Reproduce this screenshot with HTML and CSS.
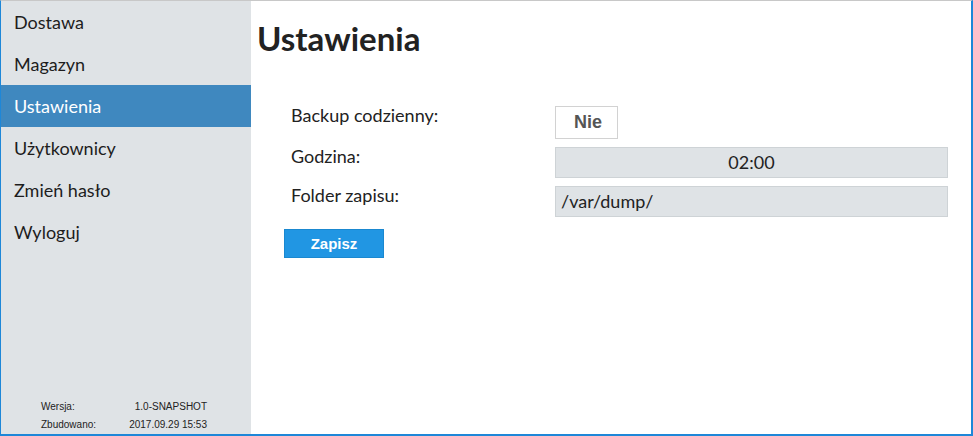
FILE: index.html
```html
<!DOCTYPE html>
<html lang="pl">
<head>
<meta charset="utf-8">
<title>Ustawienia</title>
<link rel="stylesheet" href="styles.css">
</head>
<body>
<div class="frame">
  <aside class="sidebar">
    <nav class="nav">
      <a class="nav-item">Dostawa</a>
      <a class="nav-item">Magazyn</a>
      <a class="nav-item active">Ustawienia</a>
      <a class="nav-item">Użytkownicy</a>
      <a class="nav-item">Zmień hasło</a>
      <a class="nav-item">Wyloguj</a>
    </nav>
    <div class="build">
      <div class="build-row"><span>Wersja:</span><span>1.0-SNAPSHOT</span></div>
      <div class="build-row"><span>Zbudowano:</span><span>2017.09.29 15:53</span></div>
    </div>
  </aside>
  <main class="main">
    <h1 class="title">Ustawienia</h1>
    <div class="form">
      <div class="label">Backup codzienny:</div>
      <div class="ctrl"><button class="toggle">Nie</button></div>
      <div class="label">Godzina:</div>
      <div class="ctrl"><div class="field center">02:00</div></div>
      <div class="label">Folder zapisu:</div>
      <div class="ctrl"><div class="field">/var/dump/</div></div>
    </div>
    <button class="save">Zapisz</button>
  </main>
</div>
</body>
</html>
```
FILE: styles.css
```css
html, body {
  margin: 0;
  padding: 0;
  background: #fff;
}
.frame {
  box-sizing: border-box;
  width: 973px;
  height: 436px;
  border-top: 1px solid #c8c8c8;
  border-left: 1px solid #1e87d8;
  border-right: 2px solid #1e87d8;
  border-bottom: 2px solid #1e87d8;
  display: flex;
  font-family: Lato, "Liberation Sans", sans-serif;
  color: #222;
}
.sidebar {
  width: 250px;
  flex: none;
  background: #dfe3e6;
  display: flex;
  flex-direction: column;
  justify-content: space-between;
}
.nav {
  display: flex;
  flex-direction: column;
}
.nav-item {
  height: 42px;
  line-height: 42px;
  padding-left: 13px;
  font-size: 18px;
  color: #1d1d1d;
}
.nav-item.active {
  background: #3f88bf;
  color: #fff;
}
.build {
  margin-left: 40px;
  width: 166px;
  font-family: "Liberation Sans", Arial, sans-serif;
  font-size: 10px;
  color: #222;
}
.build-row {
  display: flex;
  justify-content: space-between;
  line-height: 18px;
}
.main {
  flex: 1;
  padding-left: 6px;
}
.title {
  margin: 17px 0 0;
  font-size: 33px;
  font-weight: 700;
  color: #222;
}
.form {
  margin: 48px 0 0 34px;
  display: grid;
  grid-template-columns: 264px 393px;
  row-gap: 8px;
}
.label {
  font-size: 18px;
  line-height: 18px;
  color: #222;
}
.toggle {
  box-sizing: border-box;
  height: 33px;
  width: 63px;
  background: #fff;
  border: 1px solid #d2d2d2;
  font-family: "Liberation Sans", Arial, sans-serif;
  font-weight: 700;
  font-size: 18px;
  color: #555;
  padding: 0 0 0 3px;
  display: block;
}
.field {
  box-sizing: border-box;
  height: 31px;
  background: #dfe3e6;
  border: 1px solid #ced3d6;
  font-size: 18px;
  line-height: 29px;
  padding-left: 5px;
  color: #222;
}
.field.center {
  text-align: center;
  padding-left: 0;
}
.save {
  display: block;
  box-sizing: border-box;
  margin: 12px 0 0 27px;
  width: 100px;
  height: 29px;
  background: #2196e3;
  border: 1px solid #1a88d0;
  color: #fff;
  font-family: "Liberation Sans", Arial, sans-serif;
  font-weight: 700;
  font-size: 15px;
  padding: 0;
}
```
